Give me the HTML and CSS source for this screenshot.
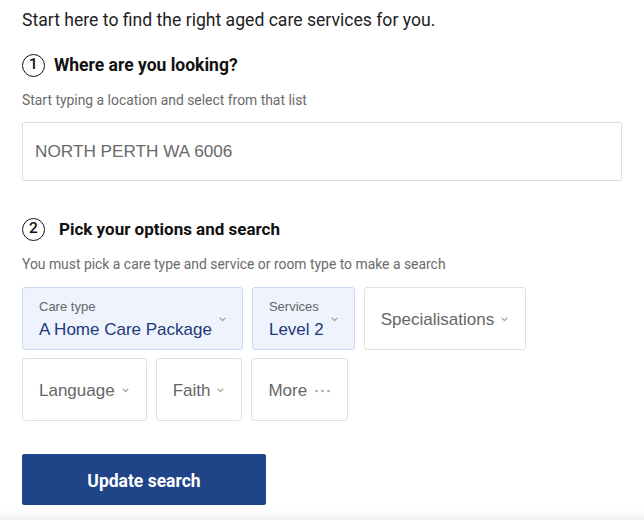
FILE: index.html
```html
<!DOCTYPE html>
<html lang="en">
  <head>
    <meta charset="UTF-8" />
    <meta name="viewport" content="width=device-width, initial-scale=1.0" />
    <title>Find aged care</title>
    <link rel="stylesheet" href="styles.css">
  </head>

  <body>
    <main class="finder">
      <p class="intro">Start here to find the right aged care services for you.</p>

      <h2 class="step"><span class="step-num">1</span>Where are you looking?</h2>
      <p class="hint">Start typing a location and select from that list</p>
      <input class="location" type="text" value="NORTH PERTH WA 6006" />

      <h2 class="step step-two"><span class="step-num">2</span>Pick your options and search</h2>
      <p class="hint">You must pick a care type and service or room type to make a search</p>

      <div class="filters">
        <div class="filter-row">
          <div class="filter selected">
            <div class="filter-text">
              <span class="filter-label">Care type</span>
              <span class="filter-value">A Home Care Package</span>
            </div>
            <svg class="chev" width="7" height="5" viewBox="0 0 7 5"><path d="M1 1.2 L3.5 3.7 L6 1.2" /></svg>
          </div>
          <div class="filter selected">
            <div class="filter-text">
              <span class="filter-label">Services</span>
              <span class="filter-value">Level 2</span>
            </div>
            <svg class="chev" width="7" height="5" viewBox="0 0 7 5"><path d="M1 1.2 L3.5 3.7 L6 1.2" /></svg>
          </div>
          <div class="filter">
            <span class="filter-value">Specialisations</span>
            <svg class="chev" width="7" height="5" viewBox="0 0 7 5"><path d="M1 1.2 L3.5 3.7 L6 1.2" /></svg>
          </div>
        </div>
        <div class="filter-row">
          <div class="filter">
            <span class="filter-value">Language</span>
            <svg class="chev" width="7" height="5" viewBox="0 0 7 5"><path d="M1 1.2 L3.5 3.7 L6 1.2" /></svg>
          </div>
          <div class="filter">
            <span class="filter-value">Faith</span>
            <svg class="chev" width="7" height="5" viewBox="0 0 7 5"><path d="M1 1.2 L3.5 3.7 L6 1.2" /></svg>
          </div>
          <div class="filter filter-more">
            <span class="filter-value">More</span>
            <svg class="dots" width="17" height="4" viewBox="0 0 17 4">
              <circle cx="2.5" cy="2" r="1.3" />
              <circle cx="8.5" cy="2" r="1.3" />
              <circle cx="14.5" cy="2" r="1.3" />
            </svg>
          </div>
        </div>
      </div>

      <button class="submit" type="button">Update search</button>
    </main>
    <div class="page-shade"></div>
  </body>
</html>
```

FILE: styles.css
```css
* {
  margin: 0;
  padding: 0;
  box-sizing: border-box;
}

html,
body {
  height: 100%;
  overflow: hidden;
}

body {
  background: #fff;
  font-family: Roboto, "Liberation Sans", sans-serif;
  color: #1d1d1d;
}

.finder {
  padding: 8px 22px 0;
}

.intro {
  font-size: 17.6px;
  line-height: 24px;
  color: #222;
}

.step {
  display: flex;
  align-items: center;
  gap: 9px;
  margin-top: 21px;
  font-size: 17.5px;
  line-height: 24px;
  font-weight: 700;
  color: #111;
}

.step-two {
  margin-top: 36px;
  gap: 14px;
  font-size: 17px;
}

.step-num {
  display: flex;
  align-items: center;
  justify-content: center;
  width: 23px;
  height: 23px;
  border: 1.6px solid #111;
  border-radius: 50%;
  font-size: 15.5px;
  font-weight: 500;
  line-height: 1;
}

.hint {
  margin-top: 14px;
  font-size: 13.9px;
  line-height: 18px;
  color: #6b6b6b;
}

.location {
  display: block;
  width: 600px;
  height: 59px;
  margin-top: 13px;
  padding: 0 12px;
  border: 1px solid #dedede;
  border-radius: 2px;
  font-family: "Liberation Sans", Arial, sans-serif;
  font-size: 17.2px;
  color: #6a6a6a;
  background: #fff;
  outline: none;
}

.filters {
  display: flex;
  flex-direction: column;
  gap: 8px;
  margin-top: 14px;
}

.filter-row {
  display: flex;
  gap: 9px;
}

.filter {
  display: flex;
  align-items: center;
  gap: 7px;
  height: 63px;
  padding: 2px 17px 0 16px;
  border: 1px solid #dfdfdf;
  border-radius: 3px;
  background: #fff;
  font-family: "Liberation Sans", Arial, sans-serif;
}

.filter.selected {
  padding-right: 16px;
  background: #eef3fd;
  border-color: #cdd9ee;
}

.filter-text {
  display: flex;
  flex-direction: column;
}

.filter-label {
  font-size: 13px;
  line-height: 17px;
  color: #666;
}

.filter-value {
  font-size: 17px;
  line-height: 22px;
  color: #666;
}

.selected .filter-value {
  margin-top: 4px;
  color: #1e3a78;
}

.chev {
  flex: none;
  fill: none;
  stroke: #9a9a9a;
  stroke-width: 1.2;
  stroke-linecap: round;
  stroke-linejoin: round;
}

.filter-more {
  padding-right: 16px;
}

.dots {
  flex: none;
  fill: #a8a8a8;
}

.submit {
  display: block;
  width: 244px;
  height: 51px;
  margin-top: 33px;
  padding-top: 2px;
  border: none;
  border-radius: 2px;
  background: #1f4488;
  color: #fff;
  font-family: Roboto, "Liberation Sans", sans-serif;
  font-size: 17.5px;
  font-weight: 700;
  cursor: pointer;
}

.page-shade {
  height: 12px;
  margin-top: 4px;
  background: linear-gradient(to bottom, #fff, #efefef);
}
```
